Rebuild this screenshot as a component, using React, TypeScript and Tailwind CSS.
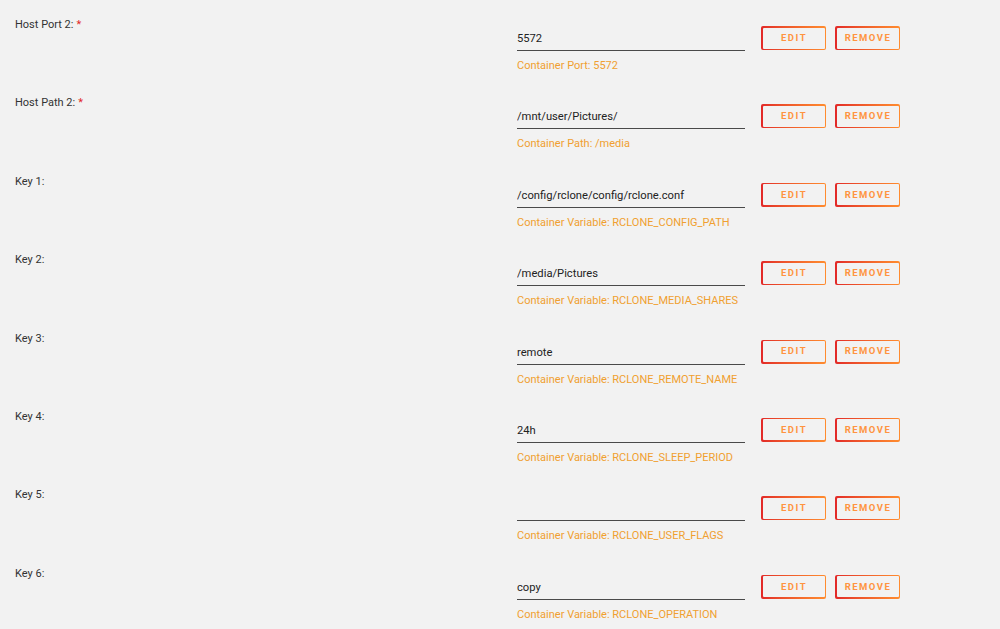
type Field = {
  label: string;
  required?: boolean;
  value: string;
  note: string;
};

const fields: Field[] = [
  { label: "Host Port 2:", required: true, value: "5572", note: "Container Port: 5572" },
  { label: "Host Path 2:", required: true, value: "/mnt/user/Pictures/", note: "Container Path: /media" },
  { label: "Key 1:", value: "/config/rclone/config/rclone.conf", note: "Container Variable: RCLONE_CONFIG_PATH" },
  { label: "Key 2:", value: "/media/Pictures", note: "Container Variable: RCLONE_MEDIA_SHARES" },
  { label: "Key 3:", value: "remote", note: "Container Variable: RCLONE_REMOTE_NAME" },
  { label: "Key 4:", value: "24h", note: "Container Variable: RCLONE_SLEEP_PERIOD" },
  { label: "Key 5:", value: "", note: "Container Variable: RCLONE_USER_FLAGS" },
  { label: "Key 6:", value: "copy", note: "Container Variable: RCLONE_OPERATION" },
];

function GradientButton({ children }: { children: string }) {
  return (
    <button className="rounded-[2px] bg-gradient-to-r from-[#e22828] to-[#ff8c2f] p-[1.5px]">
      <span className="flex h-[21px] w-[62px] items-center justify-center rounded-[1px] bg-[#f2f2f2] pl-[1px] text-[9.5px] font-bold tracking-[1.5px] text-[#ff9440]">
        {children}
      </span>
    </button>
  );
}

function FieldRow({ field }: { field: Field }) {
  return (
    <div className="flex h-[78.4px]">
      <div className="w-[517px] shrink-0 pl-[15px] text-[11px] leading-[16px] text-[#333]">
        {field.label}
        {field.required && <span className="ml-[3px] text-[#e22828]">*</span>}
      </div>
      <div className="flex flex-col pt-[9px]">
        <div className="flex items-start">
          <input
            readOnly
            value={field.value}
            className="h-[25px] w-[228px] border-b border-[#4a4a4a] bg-transparent pt-[1px] text-[11.2px] text-[#222] outline-none"
          />
          <div className="ml-[16px] flex gap-[9px]">
            <GradientButton>EDIT</GradientButton>
            <GradientButton>REMOVE</GradientButton>
          </div>
        </div>
        <div className="mt-[7px] text-[11px] leading-[16px] text-[#f0a030]">{field.note}</div>
      </div>
    </div>
  );
}

export default function App() {
  return (
    <div className="h-[629px] overflow-hidden bg-[#f2f2f2] pt-[17px] font-['Roboto',sans-serif]">
      {fields.map((f) => (
        <FieldRow key={f.label} field={f} />
      ))}
    </div>
  );
}
